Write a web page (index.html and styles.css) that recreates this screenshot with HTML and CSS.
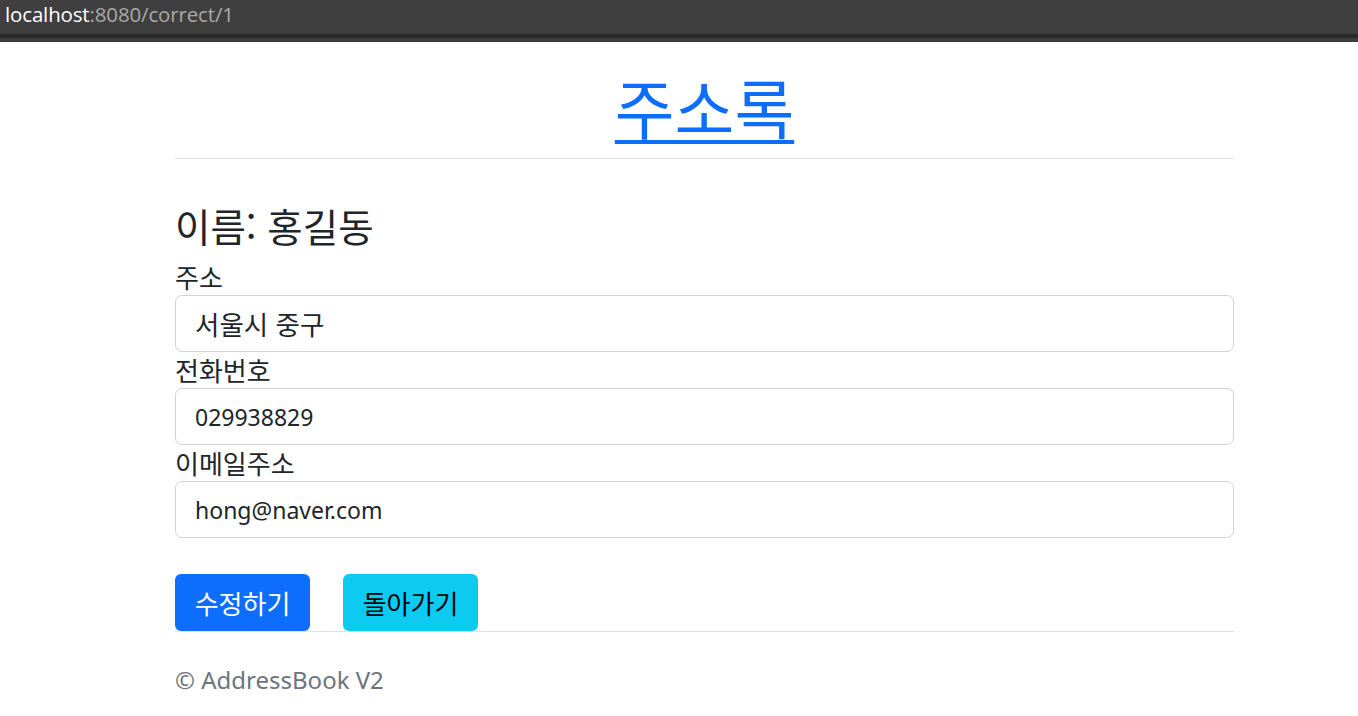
FILE: index.html
```html
<!DOCTYPE html>
<html lang="ko">
<head>
<meta charset="utf-8">
<title>주소록</title>
<link rel="stylesheet" href="styles.css">
</head>
<body>
<div class="urlbar"><span class="host">localhost</span><span class="path">:8080/correct/1</span></div>
<div class="urlbar-edge"></div>
<div class="urlbar-bottom"></div>
<main class="container">
  <header class="page-header">
    <h1 class="title"><a href="#">주소록</a></h1>
  </header>
  <hr class="rule">
  <form class="edit-form">
    <h4 class="name">이름: 홍길동</h4>
    <label class="field-label" for="addr">주소</label>
    <input class="field field-ko" id="addr" type="text" value="서울시 중구">
    <label class="field-label" for="tel">전화번호</label>
    <input class="field" id="tel" type="text" value="029938829">
    <label class="field-label" for="email">이메일주소</label>
    <input class="field" id="email" type="text" value="hong@naver.com">
    <div class="actions">
      <button type="button" class="btn btn-primary">수정하기</button>
      <button type="button" class="btn btn-info">돌아가기</button>
    </div>
  </form>
  <hr class="rule rule-footer">
  <footer class="footer">© AddressBook V2</footer>
</main>
</body>
</html>
```
FILE: styles.css
```css
* { box-sizing: border-box; }
html, body { margin: 0; padding: 0; background: #fff; }
body {
  font-family: "Noto Sans", "Noto Sans CJK KR", sans-serif;
  color: #212529;
  font-size: 24px;
  line-height: 1.5;
}
.urlbar {
  height: 34px;
  background: #3f3f3f;
  padding-left: 5px;
  font-family: "Open Sans", "Noto Sans", sans-serif;
  font-size: 20.5px;
  line-height: 29px;
  letter-spacing: -0.15px;
}
.urlbar .host { color: #ffffff; }
.urlbar .path { color: #a9a9a9; }
.urlbar-edge { height: 4px; background: #292929; }
.urlbar-bottom { height: 4px; background: #3c3c3c; }
.container {
  margin-left: 175px;
  width: 1059px;
}
.page-header { text-align: center; padding-top: 28px; }
.title {
  margin: 0;
  font-family: "Noto Sans CJK KR", sans-serif;
  font-weight: 400;
  font-size: 65px;
  line-height: 72px;
}
.title a { color: #0d6efd; text-decoration: underline; text-decoration-thickness: 4px; text-underline-offset: 6px; }
.rule { border: 0; border-top: 1px solid #dee2e6; margin: 16px 0 0; }
.edit-form { padding-top: 43px; }
.name {
  margin: 0 0 11px;
  font-family: "Noto Sans CJK KR", sans-serif;
  font-weight: 400;
  font-size: 38.5px;
  line-height: 46px;
}
.field-label {
  display: block;
  font-family: "Noto Sans CJK KR", sans-serif;
  font-size: 26px;
  line-height: 36px;
  height: 36px;
}
.field {
  display: block;
  width: 100%;
  height: 57px;
  padding: 0 19px;
  border: 1px solid #ced4da;
  border-radius: 7px;
  font-family: "Noto Sans", "Noto Sans CJK KR", sans-serif;
  font-size: 23px;
  color: #212529;
  background: #fff;
}
.field-ko { font-family: "Noto Sans CJK KR", sans-serif; font-size: 26.5px; }
.actions { display: flex; gap: 33px; margin-top: 36px; }
.btn {
  width: 135px;
  height: 57px;
  border: 0;
  border-radius: 6px;
  font-family: "Noto Sans CJK KR", sans-serif;
  font-size: 26px;
  padding: 0;
  cursor: pointer;
}
.btn-primary { background: #0d6efd; color: #fff; }
.btn-info { background: #0dcaf0; color: #000; }
.rule-footer { margin-top: 0; }
.footer {
  padding-top: 30px;
  color: #6c757d;
  font-family: "Noto Sans", sans-serif;
  font-size: 24px;
  line-height: 36px;
}
```
